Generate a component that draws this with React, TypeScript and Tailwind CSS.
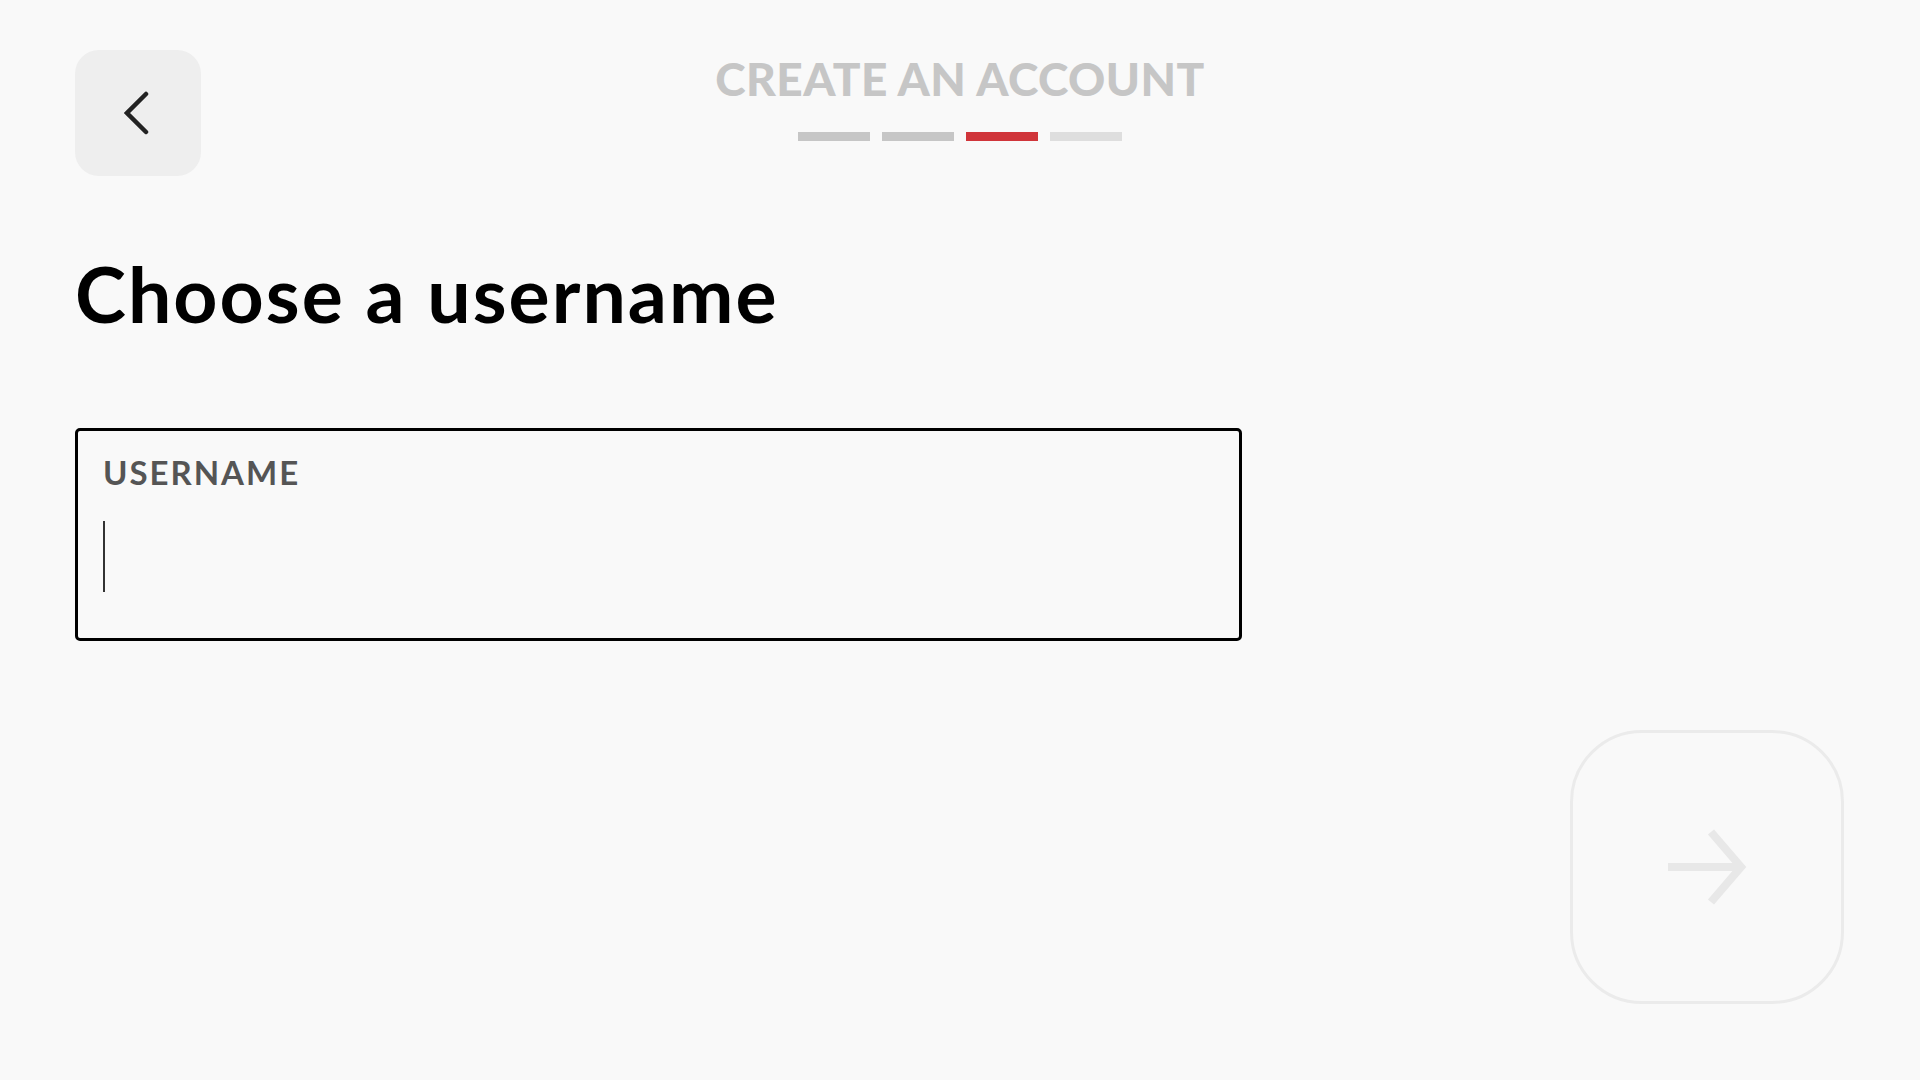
export default function App() {
  const steps = ["bg-[#c6c6c6]", "bg-[#c6c6c6]", "bg-[#d0353a]", "bg-[#dedede]"];

  return (
    <div className="min-h-screen bg-[#f9f9f9] px-[75px] pt-[50px] font-['Lato',_'Liberation_Sans',_sans-serif]">
      {/* Header */}
      <div className="grid grid-cols-[126px_1fr_126px]">
        <button className="w-[126px] h-[126px] rounded-[24px] bg-[#eeeeee] flex items-center justify-center">
          <svg width="26" height="44" viewBox="0 0 26 44" fill="none" className="ml-[-2px]">
            <polyline points="22,3 3,22 22,41" stroke="#222222" strokeWidth="4.5" strokeLinecap="round" strokeLinejoin="miter" />
          </svg>
        </button>
        <div className="flex flex-col items-center pt-[6px]">
          <h1 className="text-[46px] leading-none font-black tracking-[0.01em] text-[#c6c6c6] uppercase">
            Create an account
          </h1>
          <div className="mt-[30px] flex gap-[12px]">
            {steps.map((c, i) => (
              <div key={i} className={`w-[72px] h-[9px] ${c}`}></div>
            ))}
          </div>
        </div>
        <div></div>
      </div>

      {/* Heading */}
      <h2 className="mt-[79px] text-[77px] leading-none font-bold tracking-[0.026em] text-black">
        Choose a username
      </h2>

      {/* Username field */}
      <div className="mt-[96px] w-[1167px] h-[213px] border-[3px] border-black rounded-[5px] pl-[25px] pt-[25px]">
        <div className="text-[33px] leading-none font-bold tracking-[0.06em] text-[#555555] uppercase">
          Username
        </div>
        <div className="mt-[32px] w-[2px] h-[71px] bg-[#333333]"></div>
      </div>

      {/* Next */}
      <div className="mt-[89px] flex justify-end pr-[1px]">
        <button className="w-[274px] h-[274px] rounded-[72px] border-[3px] border-[#ebebeb] flex items-center justify-center">
          <svg width="80" height="80" viewBox="0 0 80 80" fill="none">
            <line x1="1" y1="40" x2="74" y2="40" stroke="#e8e8e8" strokeWidth="8" />
            <polyline points="44,5 74,40 44,75" stroke="#e8e8e8" strokeWidth="8" strokeLinejoin="miter" />
          </svg>
        </button>
      </div>
    </div>
  );
}
